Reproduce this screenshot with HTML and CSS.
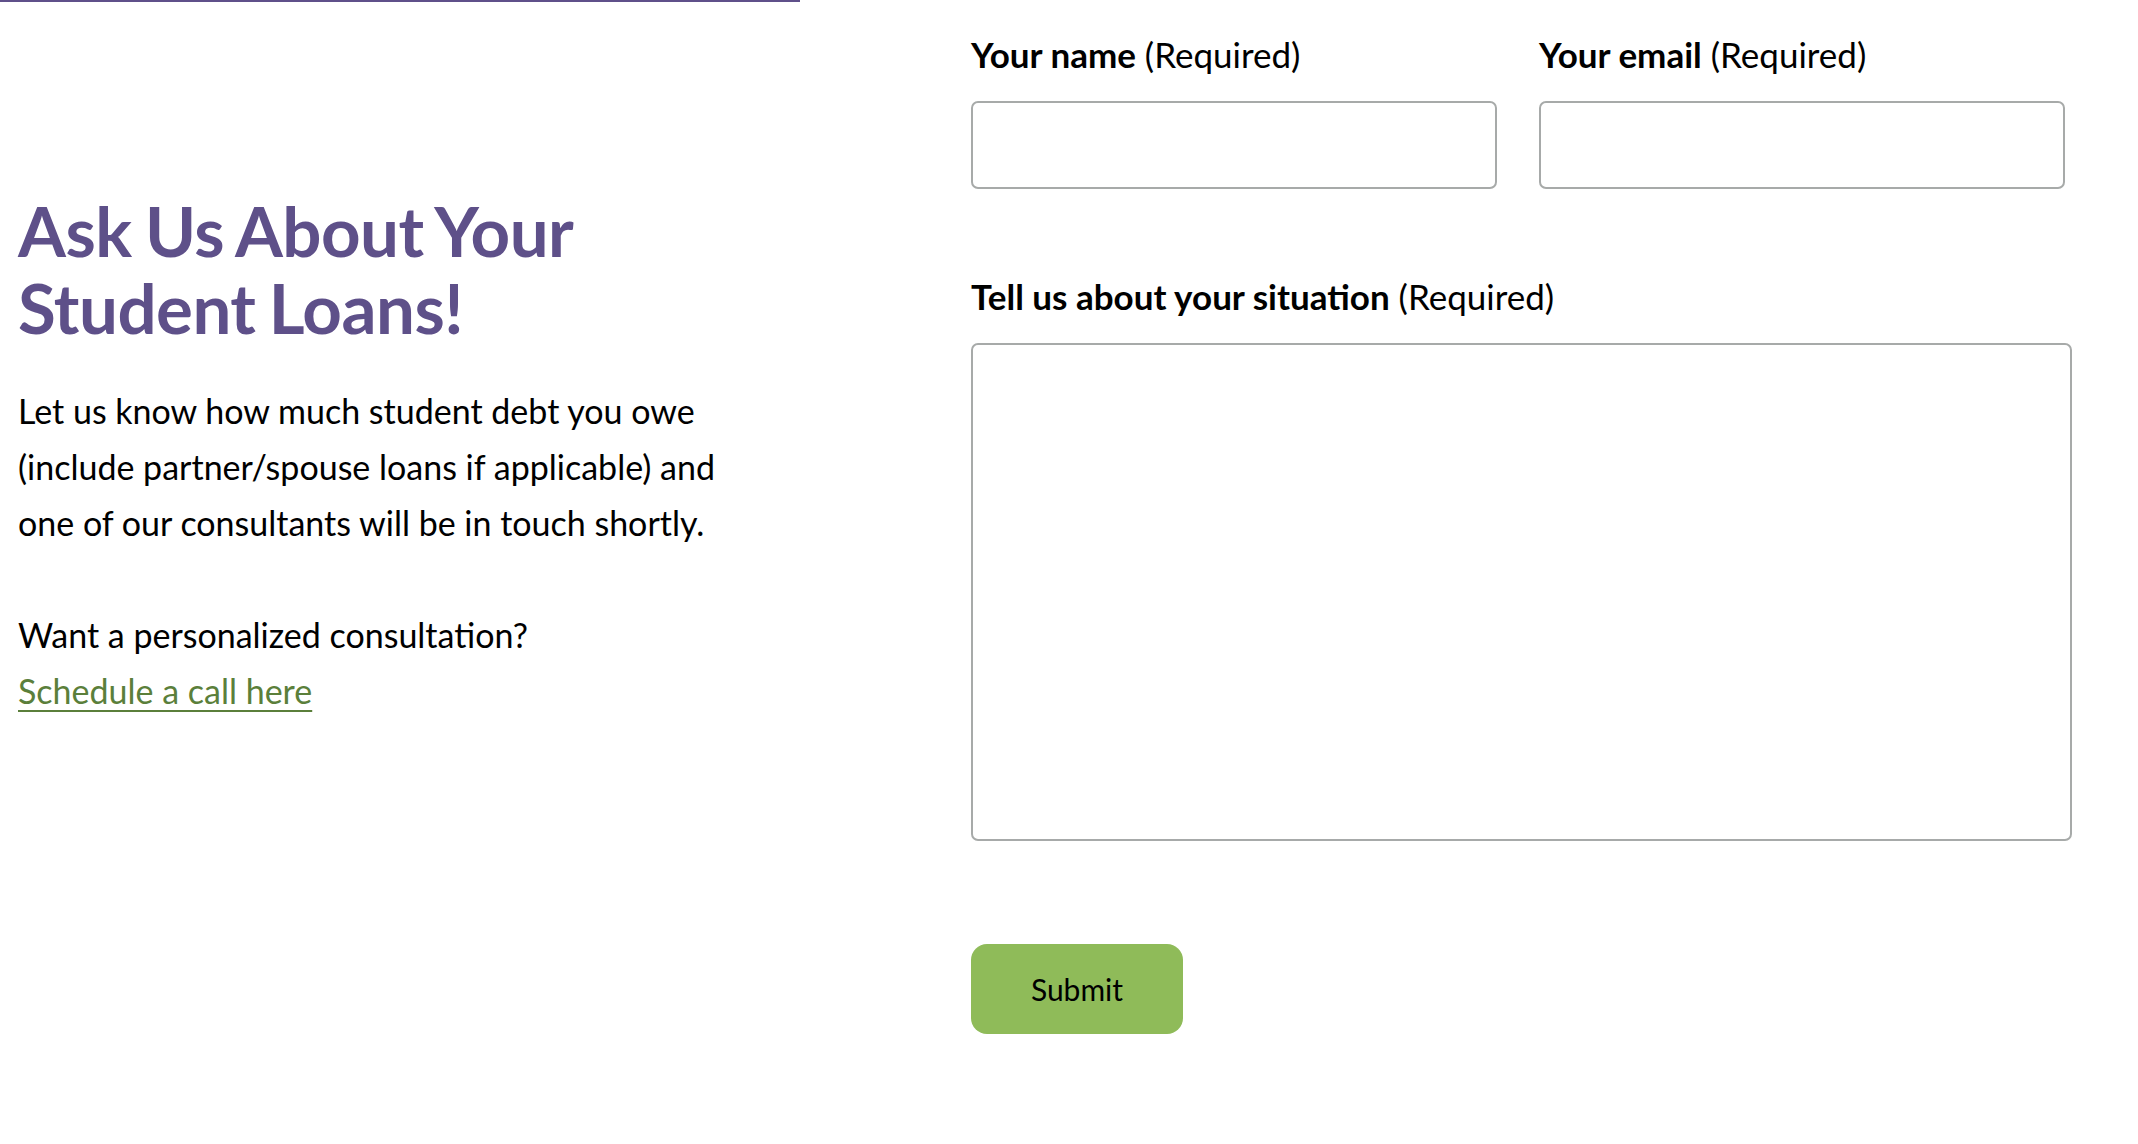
FILE: index.html
```html
<!DOCTYPE html>
<html lang="en">
<head>
<meta charset="utf-8">
<title>Ask Us About Your Student Loans!</title>
<link rel="stylesheet" href="styles.css">
</head>
<body>
<main class="page">
  <section class="intro">
    <h1 class="intro-title">Ask Us About Your Student Loans!</h1>
    <p class="intro-text">Let us know how much student debt you owe (include partner/spouse loans if applicable) and one of our consultants will be in touch shortly.</p>
    <p class="intro-text intro-cta">Want a personalized consultation?<br><a class="intro-link" href="#">Schedule a call here</a></p>
  </section>
  <form class="contact-form">
    <div class="field-row">
      <div class="field">
        <label class="field-label" for="name"><span class="field-name">Your name</span> (Required)</label>
        <input class="field-input" id="name" type="text">
      </div>
      <div class="field">
        <label class="field-label" for="email"><span class="field-name">Your email</span> (Required)</label>
        <input class="field-input" id="email" type="email">
      </div>
    </div>
    <div class="field field-wide">
      <label class="field-label" for="situation"><span class="field-name">Tell us about your situation</span> (Required)</label>
      <textarea class="field-textarea" id="situation"></textarea>
    </div>
    <button class="submit-btn" type="submit">Submit</button>
  </form>
</main>
</body>
</html>
```
FILE: styles.css
```css
* { box-sizing: border-box; }
html, body { margin: 0; padding: 0; background: #ffffff; }
body {
  font-family: Lato, "Open Sans", sans-serif;
  color: #000000;
}
.page {
  display: flex;
  align-items: flex-start;
}
.intro {
  width: 800px;
  flex: none;
  border-top: 2px solid #5f508a;
  padding: 190px 0 0 18px;
}
.intro-title {
  margin: 0;
  font-size: 69px;
  line-height: 77px;
  font-weight: 700;
  letter-spacing: -0.5px;
  word-spacing: -3px;
  color: #5e5089;
}
.intro-text {
  margin: 37px 0 0;
  max-width: 750px;
  font-size: 34px;
  line-height: 56px;
}
.intro-cta { margin-top: 56px; }
.intro-link {
  color: #5b7f3b;
  text-decoration: underline;
  text-decoration-thickness: 2px;
  text-underline-offset: 6px;
}
.contact-form {
  margin-left: 171px;
  width: 1101px;
  padding-top: 34px;
  display: flex;
  flex-direction: column;
}
.field-row {
  display: grid;
  grid-template-columns: 526px 526px;
  column-gap: 42px;
}
.field { display: flex; flex-direction: column; }
.field-wide { margin-top: 87px; }
.field-label {
  font-size: 35px;
  line-height: 40px;
  margin-bottom: 27px;
}
.field-name { font-weight: 700; }
.field-input, .field-textarea {
  display: block;
  width: 100%;
  border: 2px solid #a7aaa9;
  border-radius: 7px;
  background: #fff;
  font: inherit;
}
.field-input { height: 88px; }
.field-textarea { height: 498px; resize: none; }
.submit-btn {
  margin-top: 103px;
  align-self: flex-start;
  width: 212px;
  height: 90px;
  border: none;
  border-radius: 16px;
  background: #8fbb59;
  color: #000;
  font-family: Lato, "Open Sans", sans-serif;
  font-size: 30px;
}
```
